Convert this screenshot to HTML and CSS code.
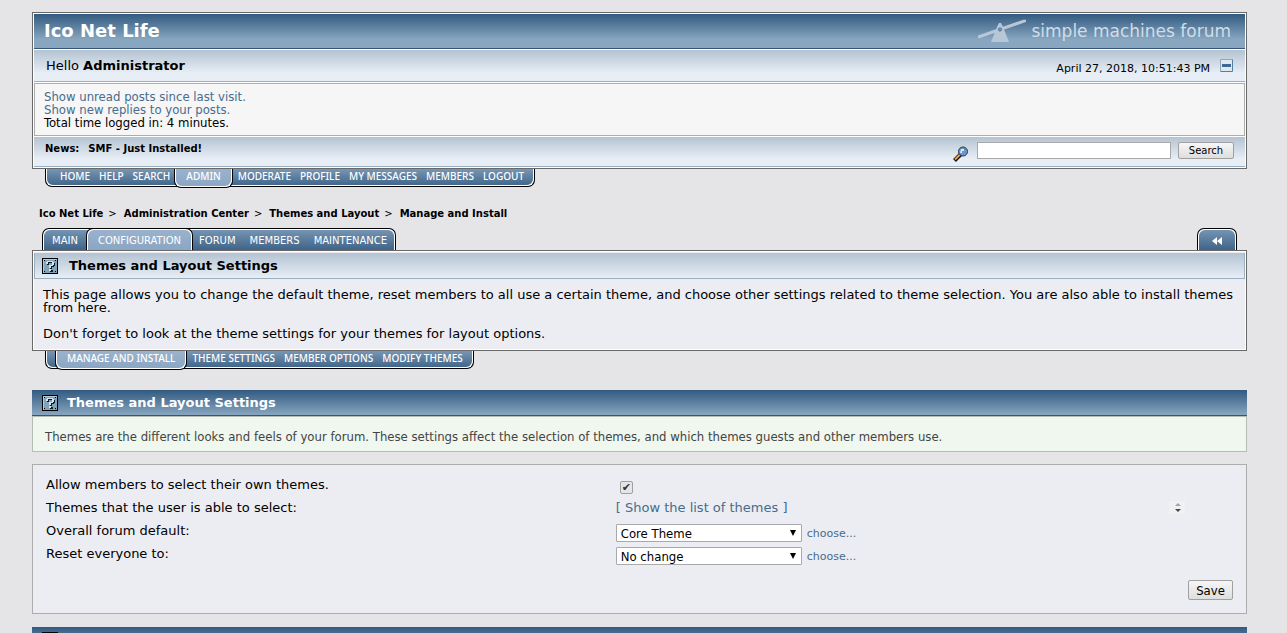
FILE: index.html
```html
<!DOCTYPE html>
<html lang="en">
<head>
<meta charset="utf-8">
<title>Themes and Layout Settings</title>
<link rel="stylesheet" href="styles.css">
</head>
<body>
<svg class="symbols" aria-hidden="true">
  <symbol id="help" viewBox="0 0 16 16">
    <rect width="16" height="16" fill="#000"/>
    <rect x="1" y="1" width="14" height="14" fill="#7fa3b8"/>
    <path d="M1 1h14v1H2v13H1z" fill="#b5cbd8"/>
    <path d="M2 2h1v1H2zM13 2h1v1h-1zM2 13h1v1H2zM13 13h1v1h-1z" fill="#000"/>
    <path d="M5 4h7v1h1v3h-1v1h-2v2H8V8h3V5H7v2H5zM8 12h3v2H8z" fill="#0c1a24"/>
    <path d="M5 3h6v1h1v3h-1v1H9v2H7V7h3V4H6v2H4V4h1zM7 11h2v2H7z" fill="#d5e3ec"/>
  </symbol>
</svg>
<header class="frame">
  <div class="titlebar">
    <h1>Ico Net Life</h1>
    <div class="logo">
      <svg width="50" height="24" viewBox="0 0 50 24"><path d="M1 16.500L47 .5l2 .5v2L2 19.500l-1-1z" fill="#b6c7d8"/><path d="M20 8l2-4h2l2 4 6 15H14z" fill="#b6c7d8"/><circle cx="23" cy="10.500" r="1.700" fill="#7893b0" stroke="#54779b" stroke-width=".8"/></svg>
      <span>simple machines forum</span>
    </div>
  </div>
  <div class="userbar">
    <div>Hello <b>Administrator</b></div>
    <div class="clock"><span>April 27, 2018, 10:51:43 PM</span>
      <button class="collapse" aria-label="Collapse header"><svg width="13" height="13"><path d="M.5 12.500V.5h12" fill="none" stroke="#8fa8bd"/><path d="M12.500.5v12H.5" fill="none" stroke="#55809b"/><path d="M2 5h9v3H2z" fill="#3d6894"/></svg></button>
    </div>
  </div>
  <div class="stats"><a href="#">Show unread posts since last visit.</a><br><a href="#">Show new replies to your posts.</a><br>Total time logged in: 4 minutes.</div>
  <div class="newsbar">
    <div class="news"><b>News:</b><b>SMF - Just Installed!</b></div>
    <form class="search">
      <svg width="16" height="16" viewBox="0 0 16 16"><path d="M1.500 14.500L8 8" stroke="#111" stroke-width="4"/><path d="M2 13.500L7.500 8" stroke="#e8a04c" stroke-width="2"/><circle cx="10" cy="5.500" r="4.500" fill="#6d93d0" stroke="#27365c"/><path d="M8 3h3v2H9v2H7z" fill="#d6e7fa"/><path d="M11 2h2v2h-2z" fill="#5c9a55"/></svg>
      <input type="text" aria-label="Search forum"><button type="button">Search</button>
    </form>
  </div>
</header>
<nav class="tabs hang">
  <a href="#">HOME</a><a href="#">HELP</a><a href="#">SEARCH</a><a href="#" class="active">ADMIN</a><a href="#">MODERATE</a><a href="#">PROFILE</a><a href="#">MY MESSAGES</a><a href="#">MEMBERS</a><a href="#">LOGOUT</a>
</nav>
<nav class="crumbs"><a href="#">Ico Net Life</a><i>&gt;</i><a href="#">Administration Center</a><i>&gt;</i><a href="#">Themes and Layout</a><i>&gt;</i><a href="#">Manage and Install</a></nav>
<div class="tabrow">
  <nav class="tabs stand"><a href="#">MAIN</a><a href="#" class="active">CONFIGURATION</a><a href="#">FORUM</a><a href="#">MEMBERS</a><a href="#">MAINTENANCE</a></nav>
  <nav class="tabs stand back"><a href="#" aria-label="Back"><svg width="10" height="8"><path d="M5 0v8L0 4zM10 0v8L5 4z" fill="#fff"/></svg></a></nav>
</div>
<section class="frame intro">
  <h2><svg class="help"><use href="#help"/></svg>Themes and Layout Settings</h2>
  <p>This page allows you to change the default theme, reset members to all use a certain theme, and choose other settings related to theme selection. You are also able to install themes from here.<br><br>Don't forget to look at the theme settings for your themes for layout options.</p>
</section>
<nav class="tabs hang sub"><a href="#" class="active">MANAGE AND INSTALL</a><a href="#">THEME SETTINGS</a><a href="#">MEMBER OPTIONS</a><a href="#">MODIFY THEMES</a></nav>
<h3 class="section"><svg class="help"><use href="#help"/></svg>Themes and Layout Settings</h3>
<p class="note">Themes are the different looks and feels of your forum. These settings affect the selection of themes, and which themes guests and other members use.</p>
<form class="settings">
  <div class="row"><label for="allow">Allow members to select their own themes.</label><div><input type="checkbox" id="allow" checked></div></div>
  <div class="row"><span>Themes that the user is able to select:</span><div class="list"><a href="#">[ Show the list of themes ]</a>
    <svg width="16" height="13"><path d="M0 0h16v13H0z" fill="#f1f1f1"/><path d="M6 5l3-3 3 3z" fill="#a3a3a3"/><path d="M6 8h6l-3 3z" fill="#444"/></svg></div></div>
  <div class="row"><label for="default">Overall forum default:</label><div><span class="pick"><select id="default"><option>Core Theme</option></select></span><a href="#" class="choose">choose...</a></div></div>
  <div class="row"><label for="reset">Reset everyone to:</label><div><span class="pick"><select id="reset"><option>No change</option></select></span><a href="#" class="choose">choose...</a></div></div>
  <div class="actions"><button type="button">Save</button></div>
</form>
<h3 class="section"><svg class="help"><use href="#help"/></svg></h3>
</body>
</html>
```
FILE: styles.css
```css
* { box-sizing: border-box; }
html { overflow: hidden; }
body { margin: 0; padding: 12px 40px 0 32px; background: #e5e5e8; color: #000; font: 13px/13px "DejaVu Sans", sans-serif; }
a { color: #476c8e; text-decoration: none; }
svg { display: block; flex: none; }
h1, h2, h3, p { margin: 0; font-size: 13px; }
button, input, select { font-family: inherit; margin: 0; color: #000; }
button { border: 1px solid #a0a0a0; border-radius: 2px; background: linear-gradient(#f6f6f6, #dedede); }
.symbols { position: absolute; width: 0; height: 0; }
.help { width: 16px; height: 16px; }
.frame { border: 1px solid #696969; background: #fff; padding: 1px; }
.titlebar, .userbar, .newsbar { display: flex; justify-content: space-between; }
.titlebar { height: 35px; align-items: center; padding: 0 14px 0 10px; border-bottom: 1px solid #375577; background: linear-gradient(#325a80, #88a6c0 75%, #88a6c0); color: #fff; }
h1 { font-size: 18px; line-height: 20px; }
.logo { display: flex; gap: 4px; color: #d0dde8; font-size: 17px; line-height: 24px; }
.userbar { height: 32px; margin-top: 1px; align-items: center; padding: 0 12px; }
.userbar, .newsbar { background: linear-gradient(#b4c3d2, #e7eef5 75%, #e7eef5); border-bottom: 1px solid #9bafc2; }
.clock { display: flex; gap: 10px; align-items: center; font-size: 11px; }
.clock span { padding-top: 5px; }
.collapse { padding: 0; border: 0; background: #dfe8ef; }
.stats, .note, select, .actions button { font-family: "DejaVu Sans Condensed", "DejaVu Sans", sans-serif; font-size: 13px; }
.stats { height: 53px; margin-top: 1px; padding: 6px 9px; border: 1px solid #adadad; background: #f6f6f6; }
.newsbar { margin-top: 1px; padding: 5px 11px 7px 11px; }
.news { display: flex; gap: 9px; font-size: 10px; }
.search { display: flex; align-items: flex-start; height: 17px; }
.search svg { margin: 4px 8px 0 0; }
.search input { width: 194px; height: 17px; border: 1px solid #a9a9a9; background: #fff; }
.search button { width: 56px; height: 17px; margin-left: 7px; padding: 0; font-size: 10px; }
.tabs { display: flex; width: max-content; background: linear-gradient(#7896b4, #3f6488); border: 1px solid #000; }
.tabs a { color: #fff; padding: 0 4px 0 5px; font: 500 10px/15px "Noto Sans", sans-serif; }
.hang { height: 18px; margin-left: 13px; padding: 0 6px 0 9px; border-top: 0; border-radius: 0 0 7px 7px; box-shadow: inset 1px -1px #fff, inset -1px -1px #fff; }
.tabs .active { background: linear-gradient(#9bb2cc, #8aa6c4); border: 1px solid #000; padding: 0 11px; }
.hang .active { height: 19px; border-top: 0; border-radius: 0 0 7px 7px; box-shadow: inset 1px -1px #fff, inset -1px -1px #fff; }
.crumbs { display: flex; margin: 20px 7px 0; font-size: 10px; font-weight: bold; height: 21px; }
.crumbs a { color: #000; }
.crumbs i { font-style: normal; font-weight: normal; margin: 0 7px 0 5px; }
.tabrow { display: flex; justify-content: space-between; align-items: flex-end; padding: 0 10px; }
.stand { height: 22px; border-bottom: 0; border-radius: 7px 7px 0 0; padding: 0 0 0 3px; box-shadow: inset 1px 1px #fff, inset -1px 1px #fff; }
.stand a { padding: 0 8px 0 6px; font: 10px/23px "DejaVu Sans", sans-serif; }
.stand .active { height: 22px; margin-top: -1px; border-bottom: 0; border-radius: 7px 7px 0 0; padding: 0 11px; box-shadow: inset 1px 1px #fff, inset -1px 1px #fff; }
.back { width: 40px; }
.back a { display: flex; align-items: center; padding: 2px 0 0 11px; }
.intro { background: #ecedf3; padding-top: 2px; box-shadow: inset 0 0 0 1px #fff; }
.intro h2 { display: flex; gap: 11px; align-items: center; height: 26px; padding-left: 7px; background: linear-gradient(#b4c3d2, #e7eef5); border: solid #9bafc2; border-width: 0 1px 1px; }
.intro p { padding: 9px 9px; }
.section { display: flex; align-items: center; gap: 9px; height: 26px; padding-left: 10px; background: linear-gradient(#325a80, #88a6c0); border-bottom: 1px solid #375577; color: #fff; }
.sub + .section { margin-top: 21px; }
.note { padding: 13px 12px 8px; border: 1px solid #b4bdb4; background: #eff7ef; color: #444; }
.settings { margin: 12px 0 13px; padding: 13px; border: 1px solid #adadad; background: #ecedf3; }
.row { display: grid; grid-template-columns: 48% 1fr; height: 23px; }
.row > div { display: flex; align-items: flex-start; }
.row input { appearance: none; width: 13px; height: 13px; margin: 3px 0 0 4px; border: 1px solid #a0a0a0; border-radius: 2px; background: #e5e5e5; display: grid; place-items: center; }
.row input::before { content: "✔"; font-size: 11px; line-height: 11px; color: #333; }
.row .list { justify-content: space-between; padding-right: 48px; }
.pick { display: grid; align-items: center; }
.pick select, .pick::after { grid-area: 1 / 1; }
.pick::after { content: ""; justify-self: end; margin-right: 6px; border: solid transparent; border-width: 6px 3px 0; border-top-color: #000; pointer-events: none; z-index: 1; }
select { appearance: none; width: 186px; height: 18px; padding: 0 4px; border: 1px solid #a9a9a9; border-radius: 1px; background: #fff; }
.choose { margin: 3px 0 0 5px; font-size: 11px; }
.actions { text-align: right; margin-top: 10px; }
.actions button { width: 45px; height: 20px; padding: 0; }
```
